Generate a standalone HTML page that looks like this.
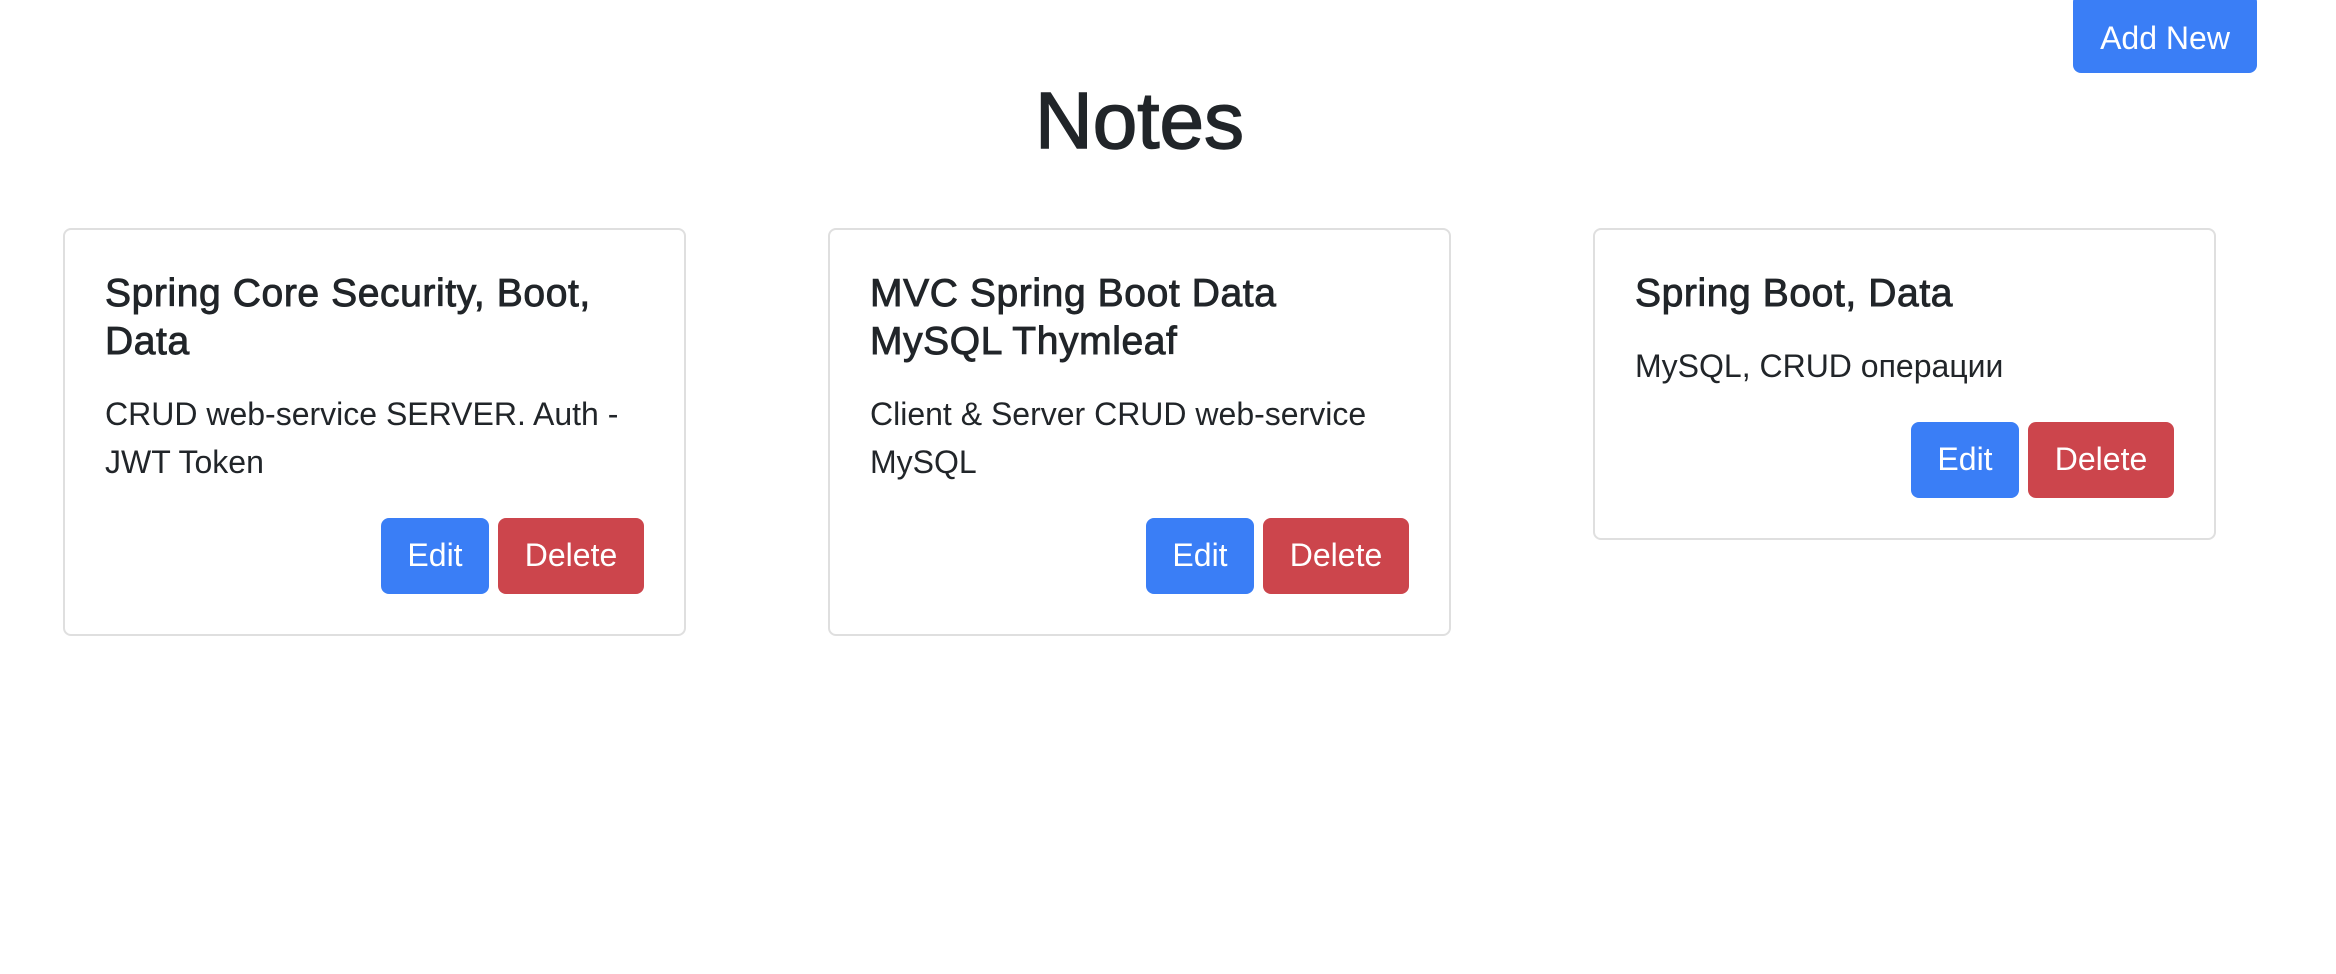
<!DOCTYPE html>
<html><head><meta charset="utf-8"><style>
*{box-sizing:border-box;margin:0;padding:0}
body{width:2336px;height:974px;background:#fff;font-family:"Liberation Sans",sans-serif;color:#212529;position:relative;overflow:hidden}
.btn{display:inline-block;color:#fff;font-size:32px;line-height:48px;padding:13px 22px;border-radius:8px;border:0}
.blue{background:#3a7ef6}.red{background:#cc454c}
#add{position:absolute;left:2073px;top:-6px;height:79px;width:184px;text-align:center;padding-top:20px}
h1{position:absolute;left:63px;width:2153px;top:73px;text-align:center;font-size:80px;line-height:96px;font-weight:normal;-webkit-text-stroke:1.5px #212529}
.card{position:absolute;top:228px;width:623px;border:2px solid #dfdfdf;border-radius:8px;padding:40px}
.card h5{font-size:39px;line-height:48px;font-weight:normal;-webkit-text-stroke:0.9px #212529;margin-bottom:24px;letter-spacing:0.6px}
.card p{font-size:32px;line-height:48px;margin-bottom:32px}
.acts{text-align:right;font-size:0}
.acts .btn{height:76px;margin-left:9px}
.e{width:108px;text-align:center}.d{width:146px;text-align:center}
</style></head><body>
<div id="add" class="btn blue">Add New</div>
<h1>Notes</h1>
<div class="card" style="left:63px"><h5>Spring Core Security, Boot, Data</h5><p>CRUD web-service SERVER. Auth - JWT Token</p><div class="acts"><span class="btn blue e">Edit</span><span class="btn red d">Delete</span></div></div>
<div class="card" style="left:828px"><h5>MVC Spring Boot Data<br>MySQL Thymleaf</h5><p>Client &amp; Server CRUD web-service MySQL</p><div class="acts"><span class="btn blue e">Edit</span><span class="btn red d">Delete</span></div></div>
<div class="card" style="left:1593px"><h5>Spring Boot, Data</h5><p>MySQL, CRUD операции</p><div class="acts"><span class="btn blue e">Edit</span><span class="btn red d">Delete</span></div></div>
</body></html>
